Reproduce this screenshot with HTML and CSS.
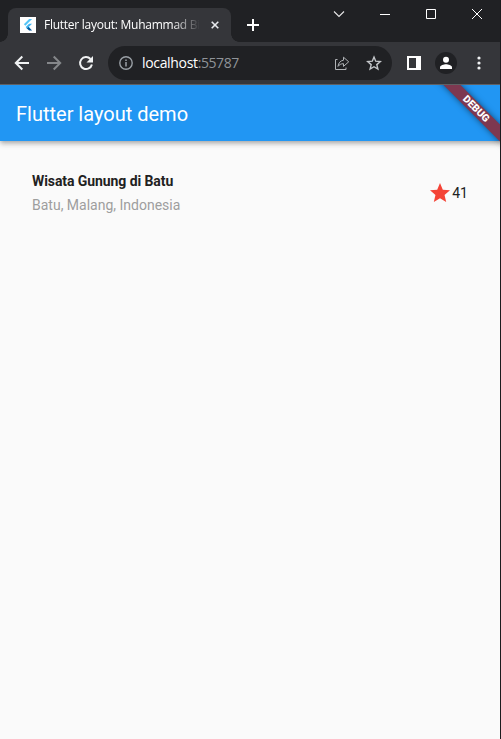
FILE: index.html
```html
<!DOCTYPE html>
<html lang="en">
<head>
<meta charset="utf-8">
<title>Flutter layout</title>
<link rel="stylesheet" href="styles.css">
</head>
<body>
<div class="window">
  <header class="tabstrip">
    <div class="tab">
      <svg class="favicon" width="16" height="16" viewBox="0 0 16 16"><path fill="#fff" d="M0 0h16v16H0z"/><path fill="#54c5f8" d="M9.1 2h3L5.4 8.700 3.900 7.200z"/><path fill="#42b5f0" d="M9.100 6.700h3L8.700 10l1.700 1.600H9.100L7 12 5.700 10z"/><path fill="#01579b" d="M7 11.500l1.600-1.500 3.500 3.500h-3z"/></svg>
      <span class="tab-title">Flutter layout: Muhammad Bi</span>
      <svg class="tab-close" width="8" height="8" viewBox="0 0 8 8"><path d="M.7.7l6.600 6.600M7.300.7L.7 7.300" stroke="#e8eaed" stroke-width="1.600"/></svg>
    </div>
    <svg class="new-tab" width="12" height="12" viewBox="0 0 12 12"><path d="M6 0v12M0 6h12" stroke="#fff" stroke-width="2"/></svg>
    <div class="controls">
      <svg width="12" height="12" viewBox="0 0 12 12"><path d="M1 3.500l5 5 5-5" fill="none" stroke="#e8e8e8" stroke-width="1.100"/></svg>
      <svg width="12" height="12" viewBox="0 0 12 12"><path d="M1 6.500h10" stroke="#fff"/></svg>
      <svg width="12" height="12" viewBox="0 0 12 12"><path d="M1.500 1.500h9v9h-9z" fill="none" stroke="#fff"/></svg>
      <svg width="12" height="12" viewBox="0 0 12 12"><path d="M1 1l10 10M11 1L1 11" stroke="#fff"/></svg>
    </div>
  </header>
  <nav class="toolbar">
    <svg class="back" width="16" height="16" viewBox="0 0 16 16"><path d="M15 8H2.300M8.300 1.500L1.800 8l6.500 6.500" fill="none" stroke="#f1f3f4" stroke-width="2"/></svg>
    <svg class="forward" width="16" height="16" viewBox="0 0 16 16"><path d="M1 8h12.700M7.700 1.500L14.200 8l-6.500 6.500" fill="none" stroke="#85878a" stroke-width="2"/></svg>
    <svg class="reload" width="16" height="16" viewBox="0 0 16 16"><path d="M13.900 9.500A6 6 0 1 1 12.500 4" fill="none" stroke="#f1f3f4" stroke-width="2"/><path d="M15 1v6.500H8.500z" fill="#f1f3f4"/></svg>
    <div class="omnibox">
      <svg width="14" height="14" viewBox="0 0 14 14"><circle cx="7" cy="7" r="6.200" fill="none" stroke="#9aa0a6" stroke-width="1.400"/><path d="M7 6v4.500M7 3.500V5" stroke="#9aa0a6" stroke-width="1.500"/></svg>
      <span class="url"><span class="host">localhost</span>:55787</span>
      <svg class="share" width="16" height="16" viewBox="0 0 16 16"><path d="M3.500 4.500H1.500v10h10.500V12.500M9.500 2.200l5.200 4.600-5.200 4.600V8.700C7 8.700 5.300 9.600 4 11.400c.4-3.400 2.300-5.700 5.500-6.200z" fill="none" stroke="#b0b3b6" stroke-width="1"/></svg>
      <svg class="bookmark" width="16" height="16" viewBox="0 0 16 16"><path d="M8 2l1.700 4.200 4.600.4-3.500 3 1.100 4.500L8 11.700l-3.900 2.400 1.100-4.500-3.500-3 4.600-.4z" fill="none" stroke="#c4c7ca" stroke-width="1.400"/></svg>
    </div>
    <svg class="panel" width="14" height="14" viewBox="0 0 14 14"><path fill="#fff" fill-rule="evenodd" d="M0 0h14v14H0zM2 2v10h7V2z"/></svg>
    <svg class="profile" width="22" height="22" viewBox="0 0 22 22"><circle cx="11" cy="11" r="11" fill="#202124"/><circle cx="11" cy="7.800" r="3" fill="#fff"/><path d="M5 17v-1.700C5 13.200 9 12.200 11 12.200s6 1 6 3.100V17z" fill="#fff"/></svg>
    <svg class="more" width="4" height="14" viewBox="0 0 4 14"><g fill="#f1f3f4"><circle cx="2" cy="2" r="1.600"/><circle cx="2" cy="7" r="1.600"/><circle cx="2" cy="12" r="1.600"/></g></svg>
  </nav>
  <main class="page">
    <div class="appbar"><h1>Flutter layout demo</h1></div>
    <section class="title-row">
      <div class="place">
        <div class="name">Wisata Gunung di Batu</div>
        <div class="location">Batu, Malang, Indonesia</div>
      </div>
      <svg width="24" height="24" viewBox="0 0 24 24"><path fill="#f44336" d="M12 17.270L18.180 21l-1.640-7.030L22 9.240l-7.190-.61L12 2 9.190 8.630 2 9.240l5.460 4.730L5.820 21z"/></svg>
      <span class="count">41</span>
    </section>
    <div class="banner"><div class="ribbon">DEBUG</div></div>
  </main>
</div>
</body>
</html>
```
FILE: styles.css
```css
* { box-sizing: border-box; }
body { margin: 0; background: #1c1c1e; }
svg { display: block; flex: none; }
.window { width: 500px; height: 739px; display: flex; flex-direction: column; overflow: hidden; }

.tabstrip { height: 42px; background: #202124; display: flex; align-items: flex-start; padding: 8px 10px 0 8px; flex: none; }
.tab { position: relative; width: 223px; height: 34px; background: #35363a; border-radius: 8px 8px 0 0; display: flex; align-items: center; padding: 0 12px; font: 12px/16px "Open Sans", sans-serif; color: #fff; }
.tab::before, .tab::after { content: ""; position: absolute; bottom: 0; width: 8px; height: 8px; }
.tab::before { left: -8px; background: radial-gradient(circle at 0 0, transparent 7.500px, #35363a 8px); }
.tab::after { right: -8px; background: radial-gradient(circle at 100% 0, transparent 7.500px, #35363a 8px); }
.tab-title { width: 155px; margin-left: 8px; white-space: nowrap; letter-spacing: -.26px; -webkit-mask-image: linear-gradient(90deg, #000 128px, transparent 156px); mask-image: linear-gradient(90deg, #000 128px, transparent 156px); }
.tab-close { margin-left: 12px; }
.new-tab { margin: 11px 0 0 16px; }
.controls { margin-left: auto; display: flex; gap: 34px; padding-right: 7px; }

.toolbar { height: 43px; background: #35363a; border-bottom: 1px solid #5f6063; display: flex; align-items: center; padding-left: 14px; flex: none; }
.forward, .reload { margin-left: 16px; }
.omnibox { width: 284px; height: 34px; border-radius: 17px; background: #202124; margin-left: 14px; display: flex; align-items: center; padding: 0 10px 0 11px; }
.url { margin-left: 9px; font: 14px/20px "Open Sans", sans-serif; letter-spacing: -.43px; color: #8f9398; }
.host { color: #fff; letter-spacing: -.33px; }
.share { margin-left: auto; }
.bookmark { margin-left: 16px; }
.panel { margin-left: 15px; }
.profile { margin-left: 14px; }
.more { margin-left: 20px; }

.page { position: relative; flex: 1; background: #fafafa; font-family: Roboto, sans-serif; overflow: hidden; }
.appbar { height: 56px; background: #2196f3; display: flex; align-items: center; padding: 2px 16px 0; box-shadow: 0 2px 4px -1px rgba(0,0,0,.2), 0 4px 5px rgba(0,0,0,.12), 0 1px 6px rgba(0,0,0,.1); }
h1 { margin: 0; font-size: 20px; line-height: 24px; font-weight: 400; color: #fff; }
.title-row { display: flex; align-items: center; padding: 32px; font-size: 14px; line-height: 16px; color: #212121; }
.place { flex: 1; }
.name { font-weight: 700; letter-spacing: -.08px; padding-bottom: 8px; }
.location { color: #9e9e9e; }
.banner { position: absolute; top: 0; right: 0; width: 90px; height: 90px; overflow: hidden; }
.ribbon { position: absolute; left: 16px; top: 18px; width: 100px; height: 12px; transform: rotate(45deg); background: #7d3850; box-shadow: 0 0 6px rgba(0,0,0,.5); color: #fff; font-size: 10.200px; line-height: 12px; font-weight: 900; text-align: center; }
```
